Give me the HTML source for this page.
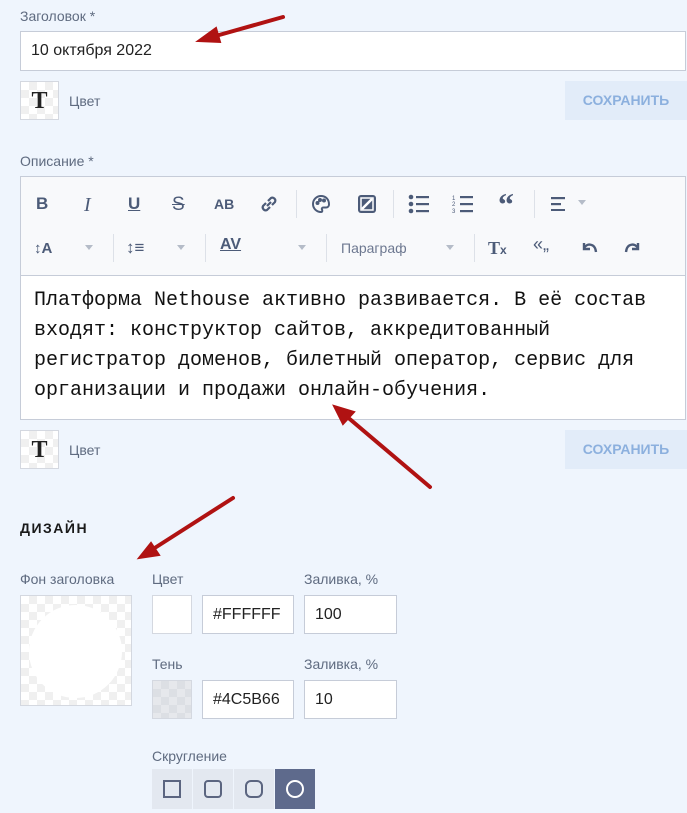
<!DOCTYPE html>
<html><head><meta charset="utf-8"><style>
*{box-sizing:border-box;margin:0;padding:0}
body{width:687px;height:813px;background:#eff5fd;font-family:"Liberation Sans",sans-serif;position:relative;overflow:hidden;color:#222}
.a{position:absolute}
.lbl{font-size:14px;color:#5f6b80}
.inp{background:#fff;border:1px solid #c6ccd8}
.chk{background-color:#fff;background-image:linear-gradient(45deg,#f0f0f0 25%,transparent 25%,transparent 75%,#f0f0f0 75%),linear-gradient(45deg,#f0f0f0 25%,transparent 25%,transparent 75%,#f0f0f0 75%);background-size:16px 16px;background-position:0 0,8px 8px;border:1px solid #d4d8e0}
.btn{background:#e2ecf9;color:#8cb0de;font-weight:bold;font-size:14px;text-align:center;line-height:39px}
.ic{position:absolute;color:#4c5b78;font-size:17px;font-weight:bold}
.sep{position:absolute;width:1px;height:28px;background:#dde1e8}
.mono{font-family:"Liberation Mono",monospace;font-size:20px;line-height:30px;color:#111}
.tt{font-family:'Liberation Serif',serif;font-size:24px;font-weight:bold;text-align:center;line-height:38px;color:#222}
</style></head><body>
<div class="a lbl" style="left:20px;top:8px">Заголовок *</div>
<div class="a inp" style="left:20px;top:31px;width:666px;height:40px;font-size:16px;padding:10px 10px">10 октября 2022</div>
<div class="a chk tt" style="left:20px;top:81px;width:39px;height:39px">T</div>
<div class="a lbl" style="left:69px;top:93px">Цвет</div>
<div class="a btn" style="left:565px;top:81px;width:122px;height:39px">СОХРАНИТЬ</div>

<div class="a lbl" style="left:20px;top:153px">Описание *</div>
<div class="a" style="left:20px;top:176px;width:666px;height:244px;border:1px solid #c6ccd8;background:#fff">
 <div style="position:absolute;left:0;top:0;width:100%;height:99px;background:#f8f9fb;border-bottom:1px solid #c6ccd8"></div>
</div>
<div class="ic" style="left:36px;top:194px">B</div>
<div class="ic" style="left:84px;top:194px;font-family:'Liberation Serif',serif;font-style:italic;font-weight:normal;font-size:20px">I</div>
<div class="ic" style="left:128px;top:194px;text-decoration:underline">U</div>
<div class="ic" style="left:172px;top:194px;text-decoration:line-through;font-weight:normal;font-size:19px">S</div>
<div class="ic" style="left:214px;top:196px;font-size:14px">AB</div>
<svg class="a" style="left:258px;top:193px" width="22" height="22" viewBox="0 0 22 22" fill="none" stroke="#4c5b78" stroke-width="2.2"><path d="M9 13l4-4M8 10l-3 3a3 3 0 004 4l3-3M14 12l3-3a3 3 0 00-4-4l-3 3"/></svg>
<div class="sep" style="left:296px;top:190px"></div>
<svg class="a" style="left:311px;top:194px" width="20" height="20" viewBox="0 0 20 20" fill="none" stroke="#4c5b78" stroke-width="2"><path d="M10 2a8 8 0 100 16c1.5 0 1.5-1.5 1-2.5s0-2 1.5-2H15a3 3 0 003-3C18 5 14.5 2 10 2z"/><circle cx="6.5" cy="9" r="1" fill="#4c5b78"/><circle cx="9" cy="6" r="1" fill="#4c5b78"/><circle cx="13" cy="6.5" r="1" fill="#4c5b78"/></svg>
<svg class="a" style="left:357px;top:194px" width="20" height="20" viewBox="0 0 20 20"><rect x="1" y="1" width="18" height="18" rx="3" fill="#4c5b78"/><path d="M5 15L15 5" stroke="#fff" stroke-width="2.5"/><rect x="4" y="4" width="12" height="12" fill="none" stroke="#fff" stroke-width="1.5"/></svg>
<div class="sep" style="left:393px;top:190px"></div>
<svg class="a" style="left:408px;top:194px" width="22" height="20" viewBox="0 0 22 20" fill="#4c5b78"><circle cx="3" cy="3" r="2.3"/><circle cx="3" cy="10" r="2.3"/><circle cx="3" cy="17" r="2.3"/><rect x="8" y="2" width="13" height="2.2"/><rect x="8" y="9" width="13" height="2.2"/><rect x="8" y="16" width="13" height="2.2"/></svg>
<svg class="a" style="left:452px;top:194px" width="22" height="20" viewBox="0 0 22 20" fill="#4c5b78"><text x="0" y="6" font-size="6" font-family="Liberation Sans">1</text><text x="0" y="12" font-size="6" font-family="Liberation Sans">2</text><text x="0" y="19" font-size="6" font-family="Liberation Sans">3</text><rect x="8" y="2" width="13" height="2.2"/><rect x="8" y="9" width="13" height="2.2"/><rect x="8" y="16" width="13" height="2.2"/></svg>
<div class="ic" style="left:498px;top:186px;font-size:32px;font-family:'Liberation Serif',serif">“</div>
<div class="sep" style="left:534px;top:190px"></div>
<svg class="a" style="left:551px;top:197px" width="16" height="14" viewBox="0 0 16 14" fill="#4c5b78"><rect y="0" width="14" height="2.2"/><rect y="6" width="10" height="2.2"/><rect y="12" width="14" height="2.2"/></svg>
<div class="a" style="left:578px;top:200px;border:4px solid transparent;border-top:5px solid #b5bcc8"></div>

<div class="ic" style="left:34px;top:240px;font-size:15px">↕A</div>
<div class="a" style="left:85px;top:245px;border:4px solid transparent;border-top:5px solid #b5bcc8"></div>
<div class="sep" style="left:113px;top:234px"></div>
<div class="ic" style="left:126px;top:238px;font-size:17px">↕≡</div>
<div class="a" style="left:177px;top:245px;border:4px solid transparent;border-top:5px solid #b5bcc8"></div>
<div class="sep" style="left:205px;top:234px"></div>
<div class="ic" style="left:220px;top:236px;font-size:16px;text-decoration:underline">AV</div>
<div class="a" style="left:298px;top:245px;border:4px solid transparent;border-top:5px solid #b5bcc8"></div>
<div class="sep" style="left:326px;top:234px"></div>
<div class="a" style="left:341px;top:240px;font-size:14px;color:#6d7890">Параграф</div>
<div class="a" style="left:446px;top:245px;border:4px solid transparent;border-top:5px solid #b5bcc8"></div>
<div class="sep" style="left:474px;top:234px"></div>
<div class="ic" style="left:488px;top:238px;font-size:18px;font-family:'Liberation Serif',serif">T<span style="font-size:12px;font-family:'Liberation Sans'">x</span></div>
<div class="ic" style="left:533px;top:234px;font-size:18px;font-weight:normal">«„</div>
<svg class="a" style="left:579px;top:240px" width="20" height="16" viewBox="0 0 20 16" fill="none" stroke="#4c5b78" stroke-width="2.4"><path d="M5 3v6h6M5 8c3-5 11-5 12 4"/></svg>
<svg class="a" style="left:623px;top:240px" width="20" height="16" viewBox="0 0 20 16" fill="none" stroke="#4c5b78" stroke-width="2.4"><path d="M15 3v6H9M15 8C12 3 4 3 3 12"/></svg>

<div class="a mono" style="left:34px;top:286px;width:640px">Платформа Nethouse активно развивается. В её состав<br>входят: конструктор сайтов, аккредитованный<br>регистратор доменов, билетный оператор, сервис для<br>организации и продажи онлайн-обучения.</div>

<div class="a chk tt" style="left:20px;top:430px;width:39px;height:39px">T</div>
<div class="a lbl" style="left:69px;top:442px">Цвет</div>
<div class="a btn" style="left:565px;top:430px;width:122px;height:39px">СОХРАНИТЬ</div>

<div class="a" style="left:20px;top:520px;font-size:14px;font-weight:bold;letter-spacing:1.5px;color:#1a1a1a">ДИЗАЙН</div>

<div class="a lbl" style="left:20px;top:571px">Фон заголовка</div>
<div class="a chk" style="left:20px;top:595px;width:112px;height:111px"><div style="position:absolute;left:8px;top:9px;width:93px;height:93px;border-radius:50%;background:#fff"></div></div>

<div class="a lbl" style="left:152px;top:571px">Цвет</div>
<div class="a lbl" style="left:304px;top:571px">Заливка, %</div>
<div class="a inp" style="left:152px;top:595px;width:40px;height:39px;border-color:#d4d8e0"></div>
<div class="a inp" style="left:202px;top:595px;width:92px;height:39px;font-size:16px;padding:10px 10px">#FFFFFF</div>
<div class="a inp" style="left:304px;top:595px;width:93px;height:39px;font-size:16px;padding:10px 10px">100</div>

<div class="a lbl" style="left:152px;top:656px">Тень</div>
<div class="a lbl" style="left:304px;top:656px">Заливка, %</div>
<div class="a chk" style="left:152px;top:680px;width:40px;height:39px;background-color:#e6e8ec;background-image:linear-gradient(45deg,#dcdfe4 25%,transparent 25%,transparent 75%,#dcdfe4 75%),linear-gradient(45deg,#dcdfe4 25%,transparent 25%,transparent 75%,#dcdfe4 75%)"></div>
<div class="a inp" style="left:202px;top:680px;width:92px;height:39px;font-size:16px;padding:10px 10px">#4C5B66</div>
<div class="a inp" style="left:304px;top:680px;width:93px;height:39px;font-size:16px;padding:10px 10px">10</div>

<div class="a lbl" style="left:152px;top:748px">Скругление</div>
<div class="a" style="left:152px;top:769px;width:40px;height:40px;background:#e3e8f0"><div style="position:absolute;left:11px;top:11px;width:18px;height:18px;border:2px solid #5b6580"></div></div>
<div class="a" style="left:193px;top:769px;width:40px;height:40px;background:#e3e8f0"><div style="position:absolute;left:11px;top:11px;width:18px;height:18px;border:2px solid #5b6580;border-radius:4px"></div></div>
<div class="a" style="left:234px;top:769px;width:40px;height:40px;background:#e3e8f0"><div style="position:absolute;left:11px;top:11px;width:18px;height:18px;border:2px solid #5b6580;border-radius:6px"></div></div>
<div class="a" style="left:275px;top:769px;width:40px;height:40px;background:#5e6a8c"><div style="position:absolute;left:11px;top:11px;width:18px;height:18px;border:2px solid #fff;border-radius:50%"></div></div>

<svg class="a" style="left:0;top:0" width="687" height="813" viewBox="0 0 687 813">
<g stroke="#b01212" stroke-width="4" stroke-linecap="round" fill="#b01212">
<line x1="283" y1="17" x2="212" y2="37"/><polygon points="198,41 216,28 220,42" stroke-width="2"/>
<line x1="430" y1="487" x2="345" y2="415"/><polygon points="334,406 354,412 343,424" stroke-width="2"/>
<line x1="233" y1="498" x2="150" y2="551"/><polygon points="139,558 151,543 159,555" stroke-width="2"/>
</g></svg>
</body></html>
